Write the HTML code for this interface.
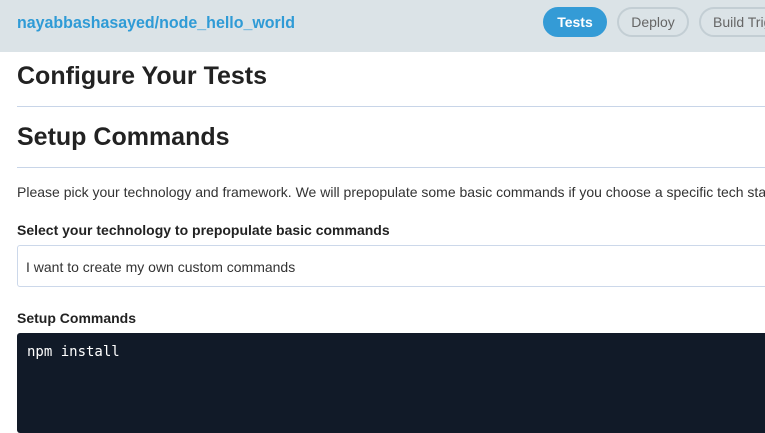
<!DOCTYPE html><html><head><style>
body{margin:0;width:765px;height:427px;overflow:hidden;background:#fff;font-family:"Liberation Sans",sans-serif;color:#222}
.hd{position:absolute;left:0;top:0;width:765px;height:52px;background:#dbe3e7}
.repo{position:absolute;left:17px;top:13px;font-size:17px;font-weight:bold;color:#2f9bd6;transform:scaleX(.94);transform-origin:left}
.b{position:absolute;top:7px;height:26px;border-radius:15px;font-size:14px;line-height:26px;text-align:center;border:2px solid #c3ced4;color:#666;box-sizing:content-box;white-space:nowrap;overflow:hidden}
h1,h2{position:absolute;left:17px;margin:0;font-size:25px;font-weight:bold;color:#222}
.hr{position:absolute;left:17px;width:760px;height:1px;background:#c8d5e8}
.t{position:absolute;left:17px;font-size:14px;white-space:nowrap}
</style></head><body>
<div class="hd"><div class="repo">nayabbashasayed/node_hello_world</div>
<div class="b" style="left:543px;width:60px;background:#349bd6;border-color:#349bd6;color:#fff;font-weight:bold">Tests</div>
<div class="b" style="left:617px;width:68px">Deploy</div>
<div class="b" style="left:699px;width:90px;text-align:left;padding-left:12px">Build Triggers</div></div>
<h1 style="top:62px">Configure Your Tests</h1>
<div class="hr" style="top:106px"></div>
<h2 style="top:123px">Setup Commands</h2>
<div class="hr" style="top:167px"></div>
<div class="t" style="top:184px;color:#333">Please pick your technology and framework. We will prepopulate some basic commands if you choose a specific tech stack.</div>
<div class="t" style="top:222px;font-weight:bold">Select your technology to prepopulate basic commands</div>
<div style="position:absolute;left:17px;top:245px;width:760px;height:42px;border:1px solid #ccd8ea;border-radius:3px;box-sizing:border-box"></div>
<div class="t" style="top:259px;left:26px;color:#333">I want to create my own custom commands</div>
<div class="t" style="top:310px;font-weight:bold">Setup Commands</div>
<div style="position:absolute;left:17px;top:333px;width:760px;height:100px;background:#111a28;border-radius:3px"></div>
<div style="position:absolute;left:27px;top:344px;color:#fff;font-family:'DejaVu Sans Mono',monospace;font-size:14px">npm install</div>
</body></html>
